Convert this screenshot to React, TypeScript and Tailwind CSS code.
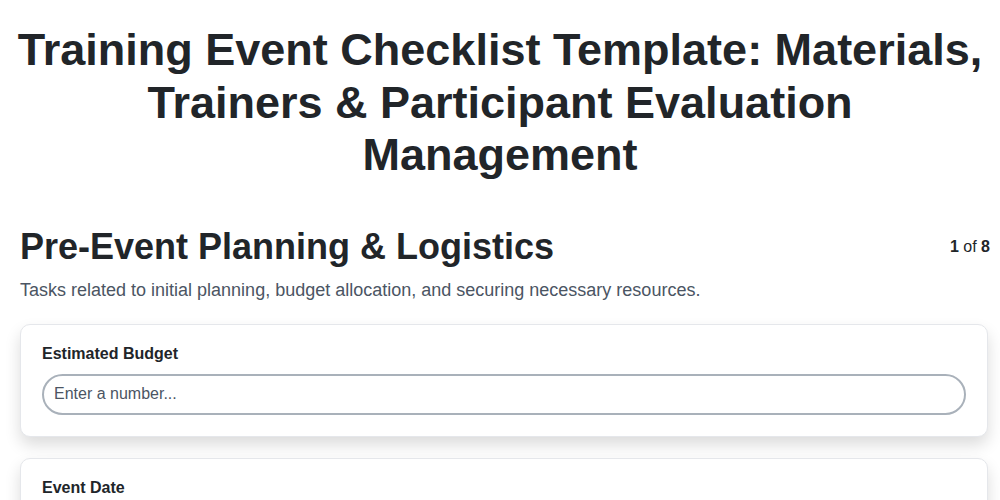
import React from "react";

export default function App() {
  return (
    <div className="min-h-screen bg-white text-[#212529]" style={{ fontFamily: '"Liberation Sans", Arial, sans-serif' }}>
      <div className="px-2 pt-[24px]">
        <h1 className="text-center text-[45px] font-bold leading-[52.5px] text-[#212529]">
          Training Event Checklist Template: Materials, Trainers &amp; Participant Evaluation Management
        </h1>
      </div>
      <div className="pl-5 pr-[10px] pt-[43px]">
        <div className="flex items-center justify-between">
          <h2 className="text-[36px] font-bold leading-[44px] text-[#212529]">Pre-Event Planning &amp; Logistics</h2>
          <div className="text-[16px] text-[#212529]">
            <span className="font-bold">1</span> of <span className="font-bold">8</span>
          </div>
        </div>
        <p className="mt-[9px] text-[18px] leading-[24px] text-[#4b5563]">
          Tasks related to initial planning, budget allocation, and securing necessary resources.
        </p>
        <div className="mt-[22px] flex flex-col gap-[21px] pr-[2px]">
          <div className="rounded-[10px] border border-[#e5e7eb] bg-white px-[21px] pb-[21px] pt-[19px] shadow-[0_8px_16px_rgba(0,0,0,0.14)]">
            <label className="block text-[16px] font-bold leading-[20px] text-[#212529]">Estimated Budget</label>
            <input
              type="text"
              placeholder="Enter a number..."
              className="mt-[10px] block h-[41px] w-full rounded-full border-2 border-[#a9b1ba] bg-white px-[10px] text-[16px] text-[#212529] placeholder:text-[#4b5563] outline-none"
              style={{ fontFamily: '"Liberation Sans", Arial, sans-serif' }}
            />
          </div>
          <div className="rounded-[10px] border border-[#e5e7eb] bg-white px-[21px] pb-[21px] pt-[19px] shadow-[0_8px_16px_rgba(0,0,0,0.14)]">
            <label className="block text-[16px] font-bold leading-[20px] text-[#212529]">Event Date</label>
            <input
              type="text"
              placeholder="Select a date..."
              className="mt-[10px] block h-[41px] w-full rounded-full border-2 border-[#a9b1ba] bg-white px-[10px] text-[16px] text-[#212529] placeholder:text-[#4b5563] outline-none"
              style={{ fontFamily: '"Liberation Sans", Arial, sans-serif' }}
            />
          </div>
        </div>
      </div>
    </div>
  );
}
